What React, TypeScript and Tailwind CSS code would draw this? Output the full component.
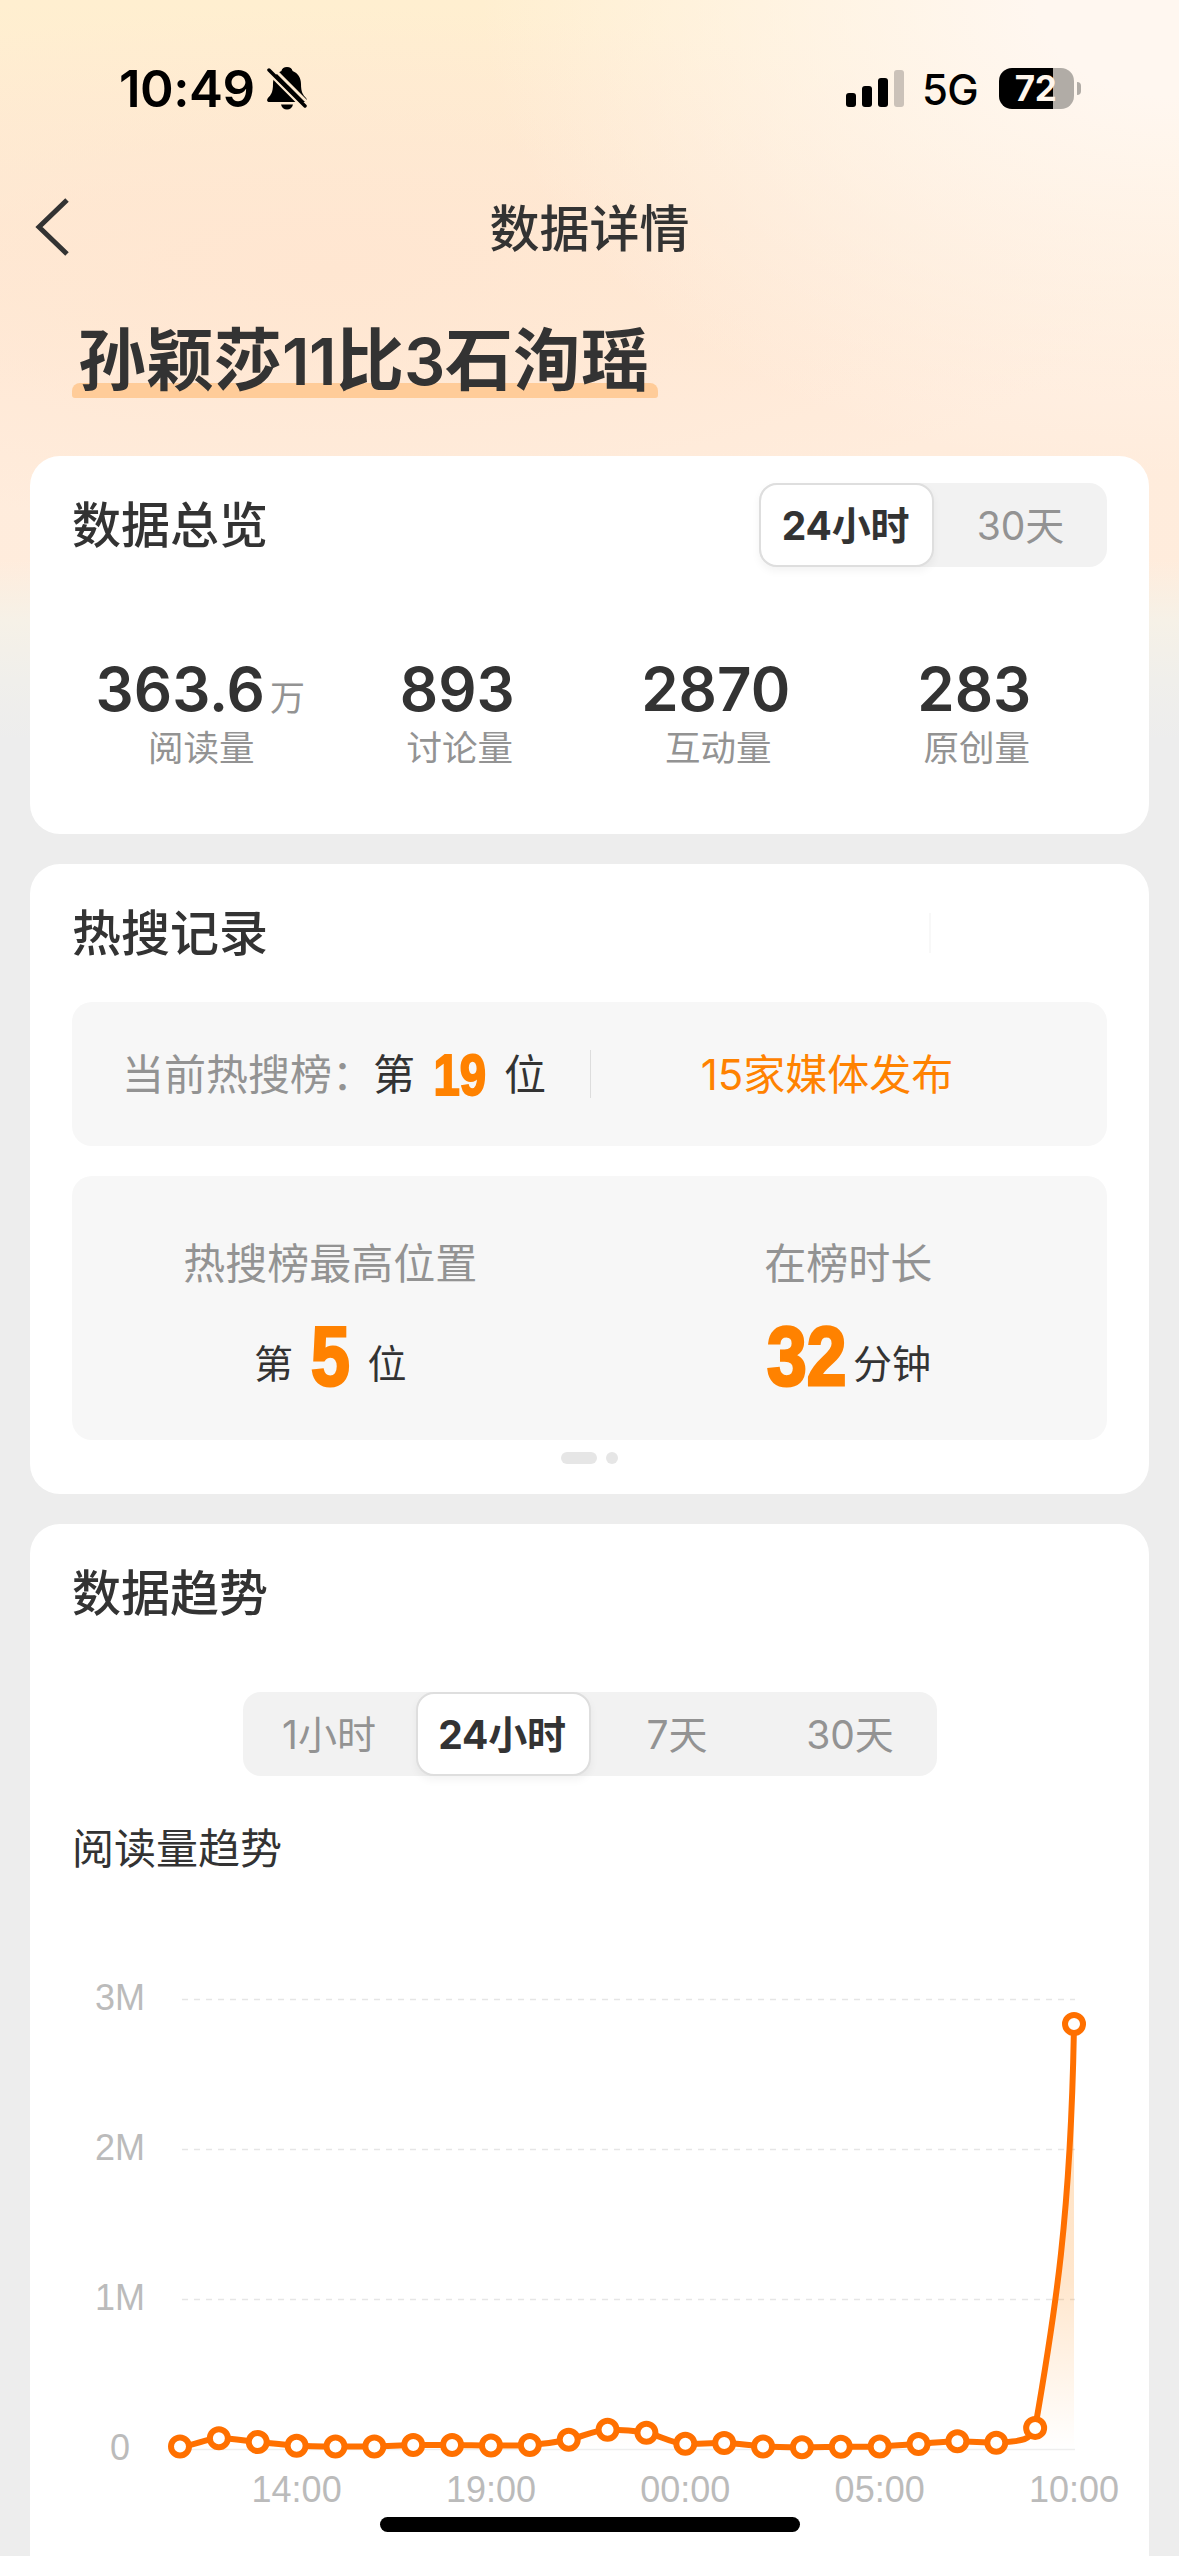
import React from 'react';

interface Stat {
  label: string;
  value: string;
  unit?: string;
}

const stats: Stat[] = [
  { label: '阅读量', value: '363.6', unit: '万' },
  { label: '讨论量', value: '893' },
  { label: '互动量', value: '2870' },
  { label: '原创量', value: '283' },
];

// reads per hour, in units of 1M
const reads = [
  0.02, 0.075, 0.05, 0.025, 0.02, 0.02, 0.03, 0.03, 0.027, 0.03, 0.065, 0.132, 0.112, 0.038, 0.043, 0.02, 0.015, 0.018,
  0.02, 0.037, 0.055, 0.045, 0.144, 2.835,
];

const X0 = 108;
const STEP = 38.87;
const Y0 = 489.5;
const UNIT = 150.1;

const points = reads.map((v, i) => ({ x: X0 + i * STEP, y: Y0 - v * UNIT }));

// monotone smoothing for the flat part, the last two segments are steeper
const linePath = () => {
  let d = `M${points[0].x} ${points[0].y}`;
  const slope = (i: number) => {
    if (i === 0 || i >= points.length - 3) return 0;
    const a = points[i].y - points[i - 1].y;
    const b = points[i + 1].y - points[i].y;
    return a * b <= 0 ? 0 : (a + b) / 2;
  };
  for (let i = 1; i < points.length - 2; i++) {
    const p = points[i - 1];
    const q = points[i];
    const h = STEP / 3;
    d += ` C${p.x + h} ${p.y + slope(i - 1) / 3} ${q.x - h} ${q.y - slope(i) / 3} ${q.x} ${q.y}`;
  }
  const a = points[points.length - 3];
  const b = points[points.length - 2];
  const c = points[points.length - 1];
  d += ` C${a.x + 24} ${a.y - 2} ${b.x - 6} ${b.y + 14} ${b.x} ${b.y}`;
  d += ` C${b.x + 20} ${b.y - 115} ${c.x - 3} ${c.y + 190} ${c.x} ${c.y}`;
  return d;
};

const yLabels = ['3M', '2M', '1M', '0'];
const xLabels = [
  { text: '14:00', index: 3 },
  { text: '19:00', index: 8 },
  { text: '00:00', index: 13 },
  { text: '05:00', index: 18 },
  { text: '10:00', index: 23 },
];

const StatusBar: React.FC = () => (
  <div className="flex h-[176px] items-start justify-between pt-[66px] pr-[98px] pl-[119px] text-black">
    <div className="flex h-11 items-center">
      <span className="text-[51px] leading-none font-semibold tracking-[-0.5px]">10:49</span>
      <svg className="ml-3 h-11 w-10" viewBox="0 0 40 44">
        <path
          d="M20 1c-3 0-5 1.6-5.600 4C9 7 6 12 6 18c0 8-2 11-5 14-1.600 2-1 4 1.500 4h35c2.500 0 3-2 1.500-4-3-3-5-6-5-14 0-6-3-11-8.400-13C25 2.600 23 1 20 1z"
          fill="#000"
        />
        <path d="M14 38.500h12c-.6 3-3 5-6 5s-5.400-2-6-5z" fill="#000" />
        <path d="M-2 3.500L38 43.500" stroke="#feead0" strokeWidth="3" />
        <path d="M4 0L42 38" stroke="#feead0" strokeWidth="3" />
        <path d="M2 4L38 40" stroke="#000" strokeWidth="3.500" strokeLinecap="round" />
      </svg>
    </div>
    <div className="flex h-11 items-center">
      <div className="flex h-[37px] items-end gap-[6px]">
        <span className="h-[14px] w-[10px] rounded-[3px] bg-black" />
        <span className="h-[21px] w-[10px] rounded-[3px] bg-black" />
        <span className="h-[29px] w-[10px] rounded-[3px] bg-black" />
        <span className="h-[37px] w-[10px] rounded-[3px] bg-[#cbc2b9]" />
      </div>
      <span className="mt-[3px] ml-[18px] w-[60px] text-[42px] leading-none font-medium tracking-[-0.8px]">5G</span>
      <div className="ml-[17px] flex h-[41px] w-[75px] items-center justify-center rounded-[13px] bg-[linear-gradient(90deg,#000_0_54px,#b1aca6_54px)]">
        <span className="mr-[2px] text-[35px] leading-none font-bold tracking-[-0.5px] text-[#fff6ec]">72</span>
      </div>
      <span className="ml-[3px] h-[13px] w-1 rounded-r-full bg-[#b1aca6]" />
    </div>
  </div>
);

interface TabsProps {
  items: string[];
  active: string;
}

const Tabs: React.FC<TabsProps> = ({ items, active }) => (
  <div className="flex h-[84px] rounded-[18px] bg-[#f2f2f2] text-[39px]">
    {items.map((item) => (
      <button
        key={item}
        className={
          item === active
            ? 'w-[175px] rounded-[18px] border-2 border-[#dedede] bg-white pt-px pr-[2px] leading-none font-bold tracking-[-0.2px] whitespace-nowrap text-[#333] shadow-[0_4px_8px_rgba(0,0,0,0.05)]'
            : 'w-[173px] pt-px leading-none whitespace-nowrap text-[#939393]'
        }
      >
        {item}
      </button>
    ))}
  </div>
);

const SectionTitle: React.FC<{ children: React.ReactNode }> = ({ children }) => (
  <h2 className="pt-[2px] text-[49px] leading-[60px] font-medium text-[#333]">{children}</h2>
);

const TrendChart: React.FC = () => {
  const d = linePath();
  const last = points[points.length - 1];
  return (
    <svg className="block overflow-visible" width="1035" height="596" viewBox="0 0 1035 596">
      <defs>
        <linearGradient id="area" x1="0" y1="0" x2="0" y2="1">
          <stop offset="0" stopColor="#ff8200" stopOpacity="0.25" />
          <stop offset="0.6" stopColor="#ff8200" stopOpacity="0.2" />
          <stop offset="1" stopColor="#ff8200" stopOpacity="0" />
        </linearGradient>
      </defs>
      {yLabels.map((label, i) => {
        const y = 39.5 + i * 150;
        return (
          <g key={label}>
            <path
              d={`M110 ${y}H1003`}
              stroke={i === 3 ? '#eeeeee' : '#e6e6e6'}
              strokeWidth="1.5"
              strokeDasharray={i === 3 ? undefined : '6 6'}
            />
            <text
              x={i === 3 ? 48 : 73}
              y={y + 10.5}
              textAnchor={i === 3 ? 'middle' : 'end'}
              className="fill-[#bbb] font-['Liberation_Sans',sans-serif] text-[36px]"
            >
              {label}
            </text>
          </g>
        );
      })}
      <path d={`${d} L${last.x} ${Y0} L${X0} ${Y0}Z`} fill="url(#area)" />
      <path d={d} fill="none" stroke="#ff7000" strokeWidth="6" strokeLinejoin="round" />
      {points.map((p) => (
        <circle key={p.x} cx={p.x} cy={p.y} r="9" fill="#fff" stroke="#ff7000" strokeWidth="6" />
      ))}
      {xLabels.map(({ text, index }) => (
        <text
          key={text}
          x={points[index].x}
          y="542"
          textAnchor="middle"
          className="fill-[#bbb] font-['Liberation_Sans',sans-serif] text-[36px]"
        >
          {text}
        </text>
      ))}
    </svg>
  );
};

const App: React.FC = () => {
  return (
    <div className="relative h-[2556px] w-[1179px] overflow-hidden bg-[#ededed] bg-[linear-gradient(180deg,transparent_560px,#f6f1e7_620px,#f0efeb_680px,#ededed_740px),radial-gradient(ellipse_700px_480px_at_100%_0,#fff7f0_20%,transparent),radial-gradient(ellipse_800px_260px_at_330px_270px,#ffe6d1,transparent),linear-gradient(180deg,#ffefd0,#feead4_220px,#ffecdc_400px,#ffeedf)] font-[Inter,'Noto_Sans_CJK_SC',sans-serif] text-[#333]">
      <StatusBar />

      <nav className="grid h-[104px] grid-cols-[1fr_auto_1fr] items-center px-[34px]">
        <svg width="36" height="60" viewBox="0 0 36 60" fill="none">
          <path d="M33 2L5 29L33 56" stroke="#333" strokeWidth="5" />
        </svg>
        <h1 className="pt-[2px] text-[50px] leading-none font-medium">数据详情</h1>
      </nav>

      <div className="flex h-[176px] items-start px-[72px] pt-[38px]">
        <div className="relative px-[6px]">
          <span className="absolute inset-x-0 bottom-0 h-[15px] rounded-t-[8px] rounded-b-[3px] bg-[#ffcc99]" />
          <p className="relative h-[80px] w-[574px] text-[68px] leading-[84px] font-bold whitespace-nowrap">
            孙颖莎<span className="text-[65px] font-semibold tracking-[-0.5px]">11</span>比
            <span className="text-[65px] font-semibold tracking-[-0.5px]">3</span>石洵瑶
          </p>
        </div>
      </div>

      <main className="flex flex-col gap-[30px] px-[30px]">
        <section className="h-[378px] rounded-[30px] bg-white px-[42px] pt-[27px]">
          <div className="flex items-center justify-between">
            <SectionTitle>数据总览</SectionTitle>
            <Tabs items={['24小时', '30天']} active="24小时" />
          </div>
          <div className="mt-[92px] grid grid-cols-4 pr-px">
            {stats.map((stat) => (
              <div key={stat.label} className="flex flex-col items-center">
                <div className="flex h-[60px] items-baseline">
                  <span className="text-[60px] leading-[60px] font-semibold">{stat.value}</span>
                  {stat.unit ? (
                    <span className="mr-[2px] ml-[5px] text-[35px] leading-none text-[#939393]">{stat.unit}</span>
                  ) : (
                    <span className="w-[5px]" />
                  )}
                </div>
                <span className="mt-[10px] text-[35.500px] leading-[40px] text-[#939393]">{stat.label}</span>
              </div>
            ))}
          </div>
        </section>

        <section className="h-[630px] rounded-[30px] bg-white px-[42px] pt-[38px]">
          <div className="flex items-center justify-between">
            <SectionTitle>热搜记录</SectionTitle>
            <span className="mr-[176px] h-10 w-[2px] bg-[#f8f8f8]" />
          </div>
          <div className="mt-[38px] flex h-[144px] items-center rounded-[20px] bg-[#f7f7f7] text-[42px] leading-none">
            <div className="flex w-[518px] items-center pt-px pl-[50px]">
              <span className="w-[251px] whitespace-nowrap text-[#939393]">当前热搜榜：</span>
              <span>第</span>
              <span className="flex w-[89px] justify-center pt-[2px]">
                <b className="scale-x-[0.83] font-['Liberation_Sans',sans-serif] text-[57px] text-[#ff8200] [-webkit-text-stroke:2px_#ff8200]">
                  19
                </b>
              </span>
              <span>位</span>
            </div>
            <span className="h-12 w-px bg-[#ddd]" />
            <span className="w-[472px] pt-px text-center text-[#ff8200]">15家媒体发布</span>
          </div>
          <div className="mt-[30px] grid h-[264px] grid-cols-2 rounded-[20px] bg-[#f7f7f7] pt-[63px] text-center">
            <div className="pr-px">
              <p className="text-[42px] leading-[50px] text-[#939393]">热搜榜最高位置</p>
              <div className="mt-[27px] flex h-[80px] items-center justify-center text-[39px] leading-none">
                <span className="mt-[14px]">第</span>
                <b className="mx-[14px] scale-x-[0.83] font-['Liberation_Sans',sans-serif] text-[84px] leading-[80px] text-[#ff8200] [-webkit-text-stroke:3px_#ff8200]">
                  5
                </b>
                <span className="mt-[14px]">位</span>
              </div>
            </div>
            <div>
              <p className="text-[42px] leading-[50px] text-[#939393]">在榜时长</p>
              <div className="mt-[27px] flex h-[80px] items-center justify-center pr-[6px] text-[39px] leading-none">
                <b className="scale-x-[0.85] font-['Liberation_Sans',sans-serif] text-[84px] leading-[80px] text-[#ff8200] [-webkit-text-stroke:3px_#ff8200]">
                  32
                </b>
                <span className="mt-[14px]">分钟</span>
              </div>
            </div>
          </div>
          <div className="mt-3 flex justify-center gap-[9px]">
            <span className="h-3 w-9 rounded-full bg-[#e6e6e6]" />
            <span className="h-3 w-3 rounded-full bg-[#e6e6e6]" />
          </div>
        </section>

        <section className="h-[1080px] rounded-t-[30px] bg-white px-[42px] pt-[38px]">
          <SectionTitle>数据趋势</SectionTitle>
          <div className="mt-[68px] flex justify-center">
            <Tabs items={['1小时', '24小时', '7天', '30天']} active="24小时" />
          </div>
          <h3 className="mt-[47px] text-[42px] leading-[52px]">阅读量趋势</h3>
          <div className="mt-[85px]">
            <TrendChart />
          </div>
        </section>
      </main>

      <div className="absolute bottom-6 left-[380px] h-[15px] w-[420px] rounded-full bg-black" />
    </div>
  );
};

export default App;
